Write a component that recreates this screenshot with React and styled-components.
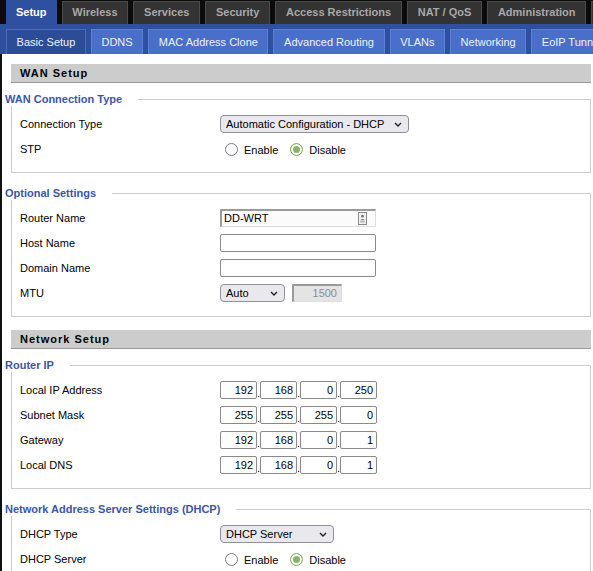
import React from 'react';
import styled, { createGlobalStyle } from 'styled-components';

const GlobalStyle = createGlobalStyle`
  html, body { margin: 0; padding: 0; background: #fff; }
  body { font-family: "Liberation Sans", Arial, sans-serif; font-size: 11px; color: #000; }
  * { box-sizing: border-box; }
`;

const Page = styled.div`
  width: 593px;
  height: 571px;
  overflow: hidden;
  display: flex;
  flex-direction: column;
`;

const TopNav = styled.nav`
  display: flex;
  gap: 5px;
  height: 24px;
  padding-left: 6px;
  background: #0b0b0b;
  overflow: hidden;
  white-space: nowrap;
  flex-shrink: 0;
`;

const TopTab = styled.div`
  flex-shrink: 0;
  padding: ${p => (p.$active ? '0 10px' : '0 9.8px')};
  font-weight: bold;
  height: ${p => (p.$active ? '24px' : '23px')};
  line-height: ${p => (p.$active ? '24px' : '21px')};
  margin-top: ${p => (p.$active ? '0' : '1px')};
  background: ${p => (p.$active ? '#2f4f9f' : '#333333')};
  color: ${p => (p.$active ? '#ffffff' : '#a8a8a8')};
  border: ${p => (p.$active ? 'none' : '1px solid #4b4b4b')};
  border-bottom: none;
`;

const SubNav = styled.nav`
  display: flex;
  gap: 5px;
  height: 30px;
  padding: 5px 0 0 6px;
  background: #2f4f9f;
  overflow: hidden;
  white-space: nowrap;
  flex-shrink: 0;
`;

const SubTab = styled.div`
  flex-shrink: 0;
  height: 25px;
  line-height: 24px;
  padding: 0 9.6px;
  border: 1px solid ${p => (p.$active ? '#4a6bbd' : '#5d80d6')};
  border-bottom: none;
  background: ${p => (p.$active ? '#2d4c98' : '#4a6fca')};
  color: #eef2fb;
`;

const Content = styled.main`
  flex: 1;
  display: flex;
  flex-direction: column;
  border-left: 2px solid #111;
  padding-right: 2px;
`;

const SectionHeader = styled.h2`
  margin: 10px 0 0 9px;
  height: 19px;
  padding-left: 9px;
  background: #cccccc;
  border-bottom: 1px solid #9a9a9a;
  font-size: 11px;
  font-weight: bold;
  line-height: 18px;
  letter-spacing: 1px;
  color: #000;

  * + & { margin-top: 13px; }
`;

const Group = styled.section`
  margin-top: 13px;
  ${SectionHeader} + & { margin-top: 9px; }
`;

const GroupTitle = styled.div`
  display: flex;
  height: 14px;
  margin-left: 3px;
`;

const GroupLegend = styled.span`
  font-weight: bold;
  color: #3a56a6;
  line-height: 14px;
  margin-right: 16px;
`;

const GroupRule = styled.span`
  flex: 1;
  margin-top: 7px;
  border-top: 1px solid #cccccc;
  border-right: 1px solid #cccccc;
`;

const GroupBody = styled.div`
  margin-left: 9px;
  border: 1px solid #cccccc;
  border-top: none;
  padding: 5px 0 11px 8px;
`;

const Row = styled.div`
  display: flex;
  align-items: center;
  height: 25px;
`;

const Label = styled.div`
  width: 200px;
  flex-shrink: 0;
`;

const SelectWrap = styled.div`
  position: relative;
  width: ${p => p.$width}px;
  height: 18px;
`;

const Select = styled.select`
  appearance: none;
  width: 100%;
  height: 18px;
  margin: 0;
  padding: 0 18px 0 5px;
  border: 1px solid #8f8f9d;
  border-radius: 4px;
  background: #e9e9ed;
  font-family: inherit;
  font-size: 11px;
  color: #000;
`;

const Chevron = styled.svg`
  position: absolute;
  right: 7px;
  top: 7px;
  pointer-events: none;
`;

const TextInput = styled.input`
  width: 156px;
  height: 18px;
  margin: 0;
  padding: 0 3px;
  border: 1px solid #8a8a8a;
  border-radius: 2px;
  font-family: inherit;
  font-size: 11px;
  background: #fff;
`;

const InsetWrap = styled.div`
  position: relative;
  width: ${p => p.$width}px;
  height: 18px;
  margin-left: ${p => p.$offset || 0}px;
`;

const InsetInput = styled.input`
  width: 100%;
  height: 18px;
  margin: 0;
  padding: 0 4px 0 2px;
  border-top: 2px solid #9b9b9b;
  border-left: 2px solid #9b9b9b;
  border-right: 1px solid #dedede;
  border-bottom: 1px solid #dedede;
  border-radius: 0;
  background: ${p => (p.disabled ? '#e4e4e4' : '#fbfbfb')};
  color: ${p => (p.disabled ? '#8c8c8c' : '#000')};
  text-align: ${p => p.$align || 'left'};
  font-family: inherit;
  font-size: 11px;
`;

const FieldIcon = styled.svg`
  position: absolute;
  right: 9px;
  top: 3px;
  pointer-events: none;
`;

const IpGroup = styled.div`
  display: flex;
  align-items: flex-end;
`;

const IpBox = styled.input`
  width: 37px;
  height: 18px;
  margin: 0;
  padding: 0 3px;
  border: 1px solid #8a8a8a;
  border-radius: 2px;
  text-align: right;
  font-family: inherit;
  font-size: 11px;
  background: #fff;
`;

const IpDot = styled.span`
  width: 3px;
  line-height: 12px;
  font-size: 11px;
`;

const RadioSet = styled.div`
  display: flex;
  align-items: center;
  margin-top: 2px;
`;

const RadioLabel = styled.label`
  display: flex;
  align-items: center;
  gap: 6px;
  margin-right: 7px;
`;

const Radio = styled.input`
  appearance: none;
  width: 13px;
  height: 13px;
  margin: 0 0 0 5px;
  border-radius: 50%;
  border: 1px solid #7b7b85;
  background: #fff;
  &:checked {
    border-color: #86b46a;
    background: #86b46a;
    box-shadow: inset 0 0 0 2px #fff;
  }
`;

const ChevronIcon = () => (
  <Chevron width="8" height="5" viewBox="0 0 8 5">
    <path d="M1 1 L4 4 L7 1" fill="none" stroke="#222" strokeWidth="1.4" />
  </Chevron>
);

const DropDown = ({ width, value, options }) => (
  <SelectWrap $width={width}>
    <Select defaultValue={value}>
      {options.map(o => (
        <option key={o}>{o}</option>
      ))}
    </Select>
    <ChevronIcon />
  </SelectWrap>
);

const RadioPair = ({ name, value }) => (
  <RadioSet>
    <RadioLabel>
      <Radio type="radio" name={name} defaultChecked={value === 'enable'} />
      Enable
    </RadioLabel>
    <RadioLabel>
      <Radio type="radio" name={name} defaultChecked={value === 'disable'} />
      Disable
    </RadioLabel>
  </RadioSet>
);

const IpField = ({ parts }) => (
  <IpGroup>
    {parts.map((p, i) => (
      <React.Fragment key={i}>
        <IpBox defaultValue={p} />
        {i < parts.length - 1 && <IpDot>.</IpDot>}
      </React.Fragment>
    ))}
  </IpGroup>
);

const FieldGroup = ({ title, children }) => (
  <Group>
    <GroupTitle>
      <GroupLegend>{title}</GroupLegend>
      <GroupRule />
    </GroupTitle>
    <GroupBody>{children}</GroupBody>
  </Group>
);

const topTabs = ['Setup', 'Wireless', 'Services', 'Security', 'Access Restrictions', 'NAT / QoS', 'Administration', 'Status'];
const subTabs = ['Basic Setup', 'DDNS', 'MAC Address Clone', 'Advanced Routing', 'VLANs', 'Networking', 'EoIP Tunnel'];

export default function App() {
  return (
    <Page>
      <GlobalStyle />
      <TopNav>
        {topTabs.map((t, i) => (
          <TopTab key={t} $active={i === 0}>{t}</TopTab>
        ))}
      </TopNav>
      <SubNav>
        {subTabs.map((t, i) => (
          <SubTab key={t} $active={i === 0}>{t}</SubTab>
        ))}
      </SubNav>
      <Content>
        <SectionHeader>WAN Setup</SectionHeader>
        <FieldGroup title="WAN Connection Type">
          <Row>
            <Label>Connection Type</Label>
            <DropDown width={189} value="Automatic Configuration - DHCP" options={['Disabled', 'Static IP', 'Automatic Configuration - DHCP', 'PPPoE']} />
          </Row>
          <Row>
            <Label>STP</Label>
            <RadioPair name="stp" value="disable" />
          </Row>
        </FieldGroup>
        <FieldGroup title="Optional Settings">
          <Row>
            <Label>Router Name</Label>
            <InsetWrap $width={156}>
              <InsetInput defaultValue="DD-WRT" />
              <FieldIcon width="9" height="13" viewBox="0 0 9 13">
                <rect x="0.5" y="0.5" width="8" height="12" fill="#f2f2f2" stroke="#8a8a8a" />
                <circle cx="4.5" cy="4.2" r="1.4" fill="#777" />
                <path d="M2.2 8.2 Q4.5 5.6 6.8 8.2 Z" fill="#777" />
                <rect x="2.2" y="9.4" width="4.6" height="1" fill="#999" />
              </FieldIcon>
            </InsetWrap>
          </Row>
          <Row>
            <Label>Host Name</Label>
            <TextInput />
          </Row>
          <Row>
            <Label>Domain Name</Label>
            <TextInput />
          </Row>
          <Row>
            <Label>MTU</Label>
            <DropDown width={65} value="Auto" options={['Auto', 'Manual']} />
            <InsetWrap $width={50} $offset={7}>
              <InsetInput disabled defaultValue="1500" $align="right" />
            </InsetWrap>
          </Row>
        </FieldGroup>
        <SectionHeader>Network Setup</SectionHeader>
        <FieldGroup title="Router IP">
          <Row>
            <Label>Local IP Address</Label>
            <IpField parts={['192', '168', '0', '250']} />
          </Row>
          <Row>
            <Label>Subnet Mask</Label>
            <IpField parts={['255', '255', '255', '0']} />
          </Row>
          <Row>
            <Label>Gateway</Label>
            <IpField parts={['192', '168', '0', '1']} />
          </Row>
          <Row>
            <Label>Local DNS</Label>
            <IpField parts={['192', '168', '0', '1']} />
          </Row>
        </FieldGroup>
        <FieldGroup title="Network Address Server Settings (DHCP)">
          <Row>
            <Label>DHCP Type</Label>
            <DropDown width={114} value="DHCP Server" options={['DHCP Forwarder', 'DHCP Server']} />
          </Row>
          <Row>
            <Label>DHCP Server</Label>
            <RadioPair name="dhcp" value="disable" />
          </Row>
        </FieldGroup>
      </Content>
    </Page>
  );
}
